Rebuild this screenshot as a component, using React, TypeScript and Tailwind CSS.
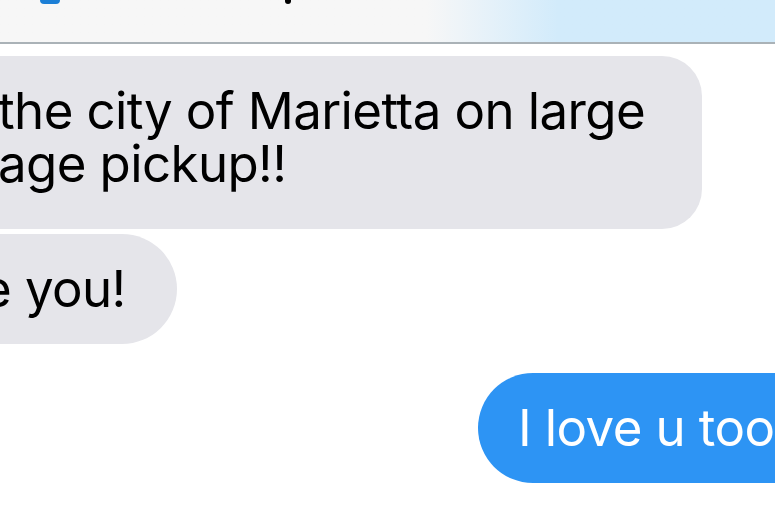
import React from "react";

const font = { fontFamily: "Inter, 'Noto Sans', sans-serif" };

export default function App() {
    return (
        <div className="w-[775px] h-[515px] overflow-hidden bg-white" style={font}>
            {/* Header strip, cut off at the top */}
            <div className="h-[42px] bg-gradient-to-r from-[#f7f7f7] from-55% to-[#d2ebfb] to-72%">
                <div className="flex">
                    <div className="ml-[40px] w-[20px] h-[4px] rounded-b-full bg-[#1c7fd6]"></div>
                    <div className="ml-[225px] w-[6px] h-[4px] rounded-b-full bg-black"></div>
                </div>
            </div>
            <div className="h-[2px] bg-[#aab2b7]"></div>

            <div className="flex flex-col pt-[12px]">
                {/* Received: long message */}
                <div className="self-start -ml-[40px] w-[742px] bg-[#e5e5ea] rounded-[40px] pl-[38px] pr-[20px] pt-[28px] pb-[39px] text-[51px] leading-[53px] text-black tracking-[-0.6px] whitespace-nowrap">
                    <div>the city of Marietta on large</div>
                    <div>age pickup!!</div>
                </div>

                {/* Received: short message */}
                <div className="self-start -ml-[60px] mt-[5px] w-[237px] h-[110px] bg-[#e5e5ea] rounded-full pl-[42px] flex items-center text-[51px] text-black tracking-[-0.6px]">
                    e you!
                </div>

                {/* Sent */}
                <div className="self-start ml-[478px] mt-[29px] w-[360px] h-[110px] bg-[#2d94f4] rounded-full pl-[40px] flex items-center text-[51px] text-white whitespace-nowrap tracking-[-0.6px]">
                    I love u too
                </div>
            </div>
        </div>
    );
}
